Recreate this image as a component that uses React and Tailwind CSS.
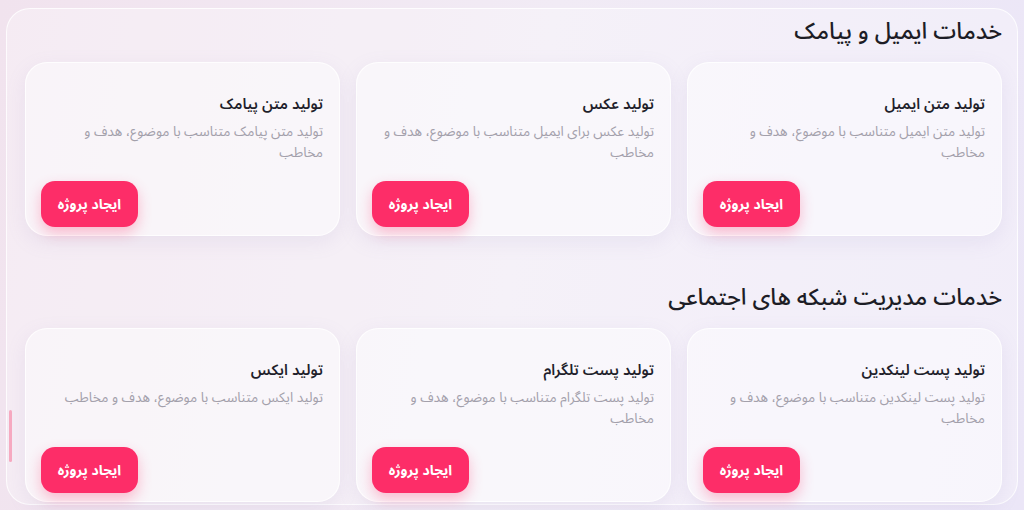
import React from "react";

const sections = [
  {
    title: "خدمات ایمیل و پیامک",
    cards: [
      { t: "تولید متن ایمیل", d: ["تولید متن ایمیل متناسب با موضوع، هدف و", "مخاطب"] },
      { t: "تولید عکس", d: ["تولید عکس برای ایمیل متناسب با موضوع، هدف و", "مخاطب"] },
      { t: "تولید متن پیامک", d: ["تولید متن پیامک متناسب با موضوع، هدف و", "مخاطب"] },
    ],
  },
  {
    title: "خدمات مدیریت شبکه های اجتماعی",
    cards: [
      { t: "تولید پست لینکدین", d: ["تولید پست لینکدین متناسب با موضوع، هدف و", "مخاطب"] },
      { t: "تولید پست تلگرام", d: ["تولید پست تلگرام متناسب با موضوع، هدف و", "مخاطب"] },
      { t: "تولید ایکس", d: ["تولید ایکس متناسب با موضوع، هدف و مخاطب"] },
    ],
  },
];

function Card({ t, d }) {
  return (
    <div className="flex h-[174px] flex-col rounded-[22px] border border-white/80 bg-white/45 pb-2 pl-[15px] pr-4 pt-[29px] shadow-[0_6px_20px_rgba(150,130,190,0.12)]">
      <div className="text-[15px] font-semibold leading-6 text-[#1f1f2b]">{t}</div>
      <div className="mt-[5px] text-[13.6px] leading-[21px] text-[#a3a0ab]">
        {d.map((l, i) => (
          <div key={i} className="whitespace-nowrap">{l}</div>
        ))}
      </div>
      <button className="mt-auto flex h-[46px] w-[97px] items-center justify-center self-end rounded-[14px] bg-[#fd2d68] text-[14px] font-bold text-white shadow-[0_6px_14px_rgba(253,45,104,0.3)]">
        ایجاد پروژه
      </button>
    </div>
  );
}

export default function App() {
  return (
    <div
      dir="rtl"
      className="h-[510px] w-[1024px] overflow-hidden bg-[linear-gradient(100deg,#f1e3ee_0%,#f1ebf5_50%,#ebe6f7_100%)] px-[6px] pt-[8px]"
      style={{ fontFamily: '"Noto Sans Arabic", Vazirmatn, "DejaVu Sans", sans-serif' }}
    >
      <div className="relative h-[497px] rounded-[24px] border border-white/80 bg-white/30 pl-[18px] pr-[15px]">
        <div className="absolute left-[2px] top-[401px] h-[52px] w-[3px] rounded-full bg-[#f6a9c0]" />
        {sections.map((s, si) => (
          <div key={si} className={si === 1 ? "mt-[39px]" : ""}>
            <h2 className="h-[45px] text-[23px] font-medium leading-[45px] text-[#1d1d26]">{s.title}</h2>
            <div className="mt-[8px] grid grid-cols-3 gap-4">
              {s.cards.map((c, ci) => (
                <Card key={ci} {...c} />
              ))}
            </div>
          </div>
        ))}
      </div>
    </div>
  );
}
